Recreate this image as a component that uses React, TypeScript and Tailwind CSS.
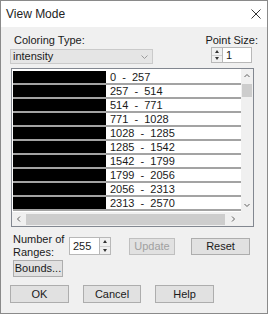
import React from 'react';

const ranges = [
  ['0', '257'],
  ['257', '514'],
  ['514', '771'],
  ['771', '1028'],
  ['1028', '1285'],
  ['1285', '1542'],
  ['1542', '1799'],
  ['1799', '2056'],
  ['2056', '2313'],
  ['2313', '2570'],
];

function Spin({ className = '' }: { className?: string }) {
  return (
    <div className={`flex flex-col border border-[#b8b8b8] bg-[#f0f0f0] ${className}`}>
      <div className="flex-1 flex items-center justify-center border-b border-[#d0d0d0]">
        <span className="block w-0 h-0 border-l-[2.5px] border-r-[2.5px] border-b-[3px] border-l-transparent border-r-transparent border-b-[#333]" />
      </div>
      <div className="flex-1 flex items-center justify-center">
        <span className="block w-0 h-0 border-l-[2.5px] border-r-[2.5px] border-t-[3px] border-l-transparent border-r-transparent border-t-[#333]" />
      </div>
    </div>
  );
}

function Btn({ children, className = '' }: { children: React.ReactNode; className?: string }) {
  return (
    <div className={`flex items-center justify-center border border-[#adadad] bg-[#e1e1e1] ${className}`}>
      {children}
    </div>
  );
}

export default function App() {
  return (
    <div
      className="w-[268px] h-[314px] flex flex-col bg-[#f0f0f0] border border-[#8a8a8a] text-[11px] leading-[13px] text-[#1a1a1a] overflow-hidden"
      style={{ fontFamily: '"Liberation Sans", Arial, sans-serif' }}
    >
      {/* title bar */}
      <div className="h-[26px] bg-white flex items-center justify-between pl-[5px] pr-[6px]">
        <span className="text-[12px] text-[#222]">View Mode</span>
        <svg width="10" height="10" viewBox="0 0 10 10">
          <path d="M0.5 0.5 L9.5 9.5 M9.5 0.5 L0.5 9.5" stroke="#333" strokeWidth="1" />
        </svg>
      </div>

      <div className="flex flex-col px-[9px]">
        {/* top controls */}
        <div className="flex justify-between pt-[7px]">
          <div className="flex flex-col">
            <span className="pl-[4px]">Coloring Type:</span>
            <div className="mt-[2px] w-[143px] h-[15px] flex items-center justify-between bg-[#e5e5e5] border border-[#cacaca] pl-[2px] pr-[4px]">
              <span>intensity</span>
              <svg width="7" height="4" viewBox="0 0 7 4">
                <path d="M0.5 0.5 L3.5 3.5 L6.5 0.5" fill="none" stroke="#9a9a9a" strokeWidth="1" />
              </svg>
            </div>
          </div>
          <div className="flex flex-col items-end">
            <span>Point Size:</span>
            <div className="flex h-[16px] mr-[6px]">
              <Spin className="w-[12px]" />
              <div className="w-[29px] bg-white border border-[#b8b8b8] border-l-0 pl-[3px] flex items-center">1</div>
            </div>
          </div>
        </div>

        {/* list */}
        <div className="mt-[4px] ml-px mr-[4px] h-[159px] border border-[#828790] bg-white grid grid-cols-[1fr_12px] grid-rows-[1fr_14px]">
          <div className="overflow-hidden pt-[2px] pl-px">
            {ranges.map(([a, b]) => (
              <div key={a} className="flex h-[14px] border-b-2 border-[#a3a3a3]">
                <div className="w-[93px] bg-black" />
                <div className="flex-1 ml-px pl-[3px] flex items-center whitespace-pre">
                  {`${a}  -  ${b}`}
                </div>
              </div>
            ))}
          </div>
          <div className="bg-[#f0f0f0] flex flex-col items-center">
            <svg width="12" height="14" viewBox="0 0 12 14">
              <path d="M3.5 8 L6 5.5 L8.5 8" fill="none" stroke="#606060" strokeWidth="1" />
            </svg>
            <div className="mt-px w-[10px] h-[13px] bg-[#cdcdcd]" />
            <div className="flex-1" />
            <svg width="12" height="14" viewBox="0 0 12 14">
              <path d="M3.5 6 L6 8.5 L8.5 6" fill="none" stroke="#606060" strokeWidth="1" />
            </svg>
          </div>
          <div className="bg-[#f0f0f0] flex items-center">
            <svg width="14" height="12" viewBox="0 0 14 12">
              <path d="M8 3.5 L5.5 6 L8 8.5" fill="none" stroke="#606060" strokeWidth="1" />
            </svg>
            <div className="flex-1 h-[11px] bg-[#cdcdcd]" />
            <svg width="16" height="12" viewBox="0 0 16 12">
              <path d="M7 3.5 L9.5 6 L7 8.5" fill="none" stroke="#606060" strokeWidth="1" />
            </svg>
          </div>
          <div className="bg-[#f0f0f0]" />
        </div>

        {/* ranges row */}
        <div className="mt-[6px] flex items-center">
          <div className="w-[59px] pl-[3px]">
            Number of
            <br />
            Ranges:
          </div>
          <div className="flex h-[18px]">
            <div className="w-[31px] bg-white border border-[#b8b8b8] pl-[3px] pt-[2px]">255</div>
            <Spin className="w-[11px] border-l-0" />
          </div>
          <Btn className="ml-[18px] w-[46px] h-[17px] bg-[#cccccc] border-[#bfbfbf] text-[#a0a0a0]">Update</Btn>
          <Btn className="ml-[16px] w-[59px] h-[17px]">Reset</Btn>
        </div>

        <Btn className="mt-px ml-[3px] w-[50px] h-[17px]">Bounds...</Btn>

        <div className="mt-[8px] flex gap-[14px]">
          <Btn className="w-[59px] h-[18px] border-[#0078d7]">OK</Btn>
          <Btn className="w-[58px] h-[18px]">Cancel</Btn>
          <Btn className="w-[59px] h-[18px]">Help</Btn>
        </div>
      </div>
    </div>
  );
}
